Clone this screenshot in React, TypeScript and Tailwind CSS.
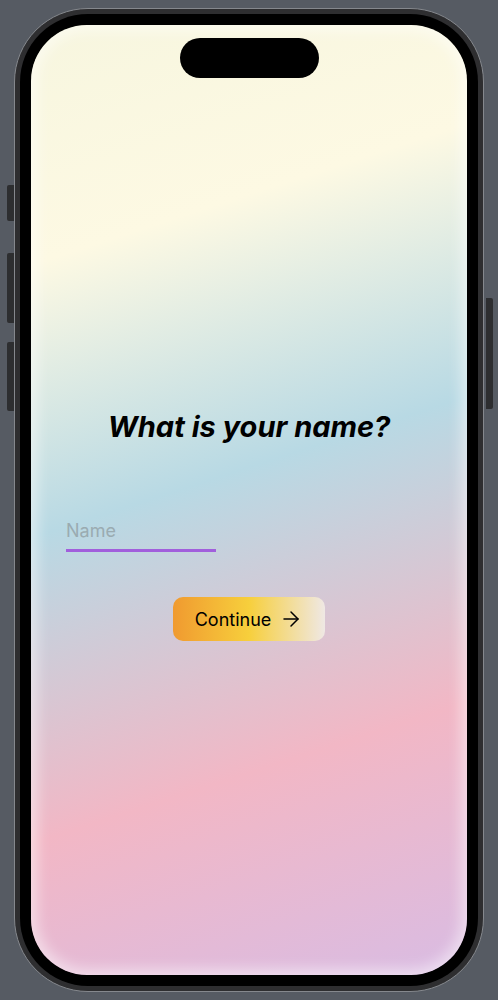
import { ArrowRight } from 'lucide-react';

export default function App() {
  return (
    <div className="relative h-[1000px] w-full overflow-hidden bg-[#565b63] font-['Inter',sans-serif]">
      {/* side buttons */}
      <div className="absolute left-[7px] top-[185px] h-[36px] w-[7px] rounded-l-[2px] bg-[#2d2e30]" />
      <div className="absolute left-[7px] top-[253px] h-[70px] w-[7px] rounded-l-[2px] bg-[#2d2e30]" />
      <div className="absolute left-[7px] top-[342px] h-[69px] w-[7px] rounded-l-[2px] bg-[#2d2e30]" />
      <div className="absolute left-[486px] top-[298px] h-[111px] w-[7px] rounded-r-[2px] bg-[#2d2e30]" />

      {/* phone frame */}
      <div className="ml-[14px] mt-[8px] h-[984px] w-[470px] rounded-[74px] border border-[#85888d] bg-[#2e2e30] p-[5px]">
        <div className="h-full w-full rounded-[68px] bg-black px-[11px] py-[11px]">
          <div className="relative h-full w-full overflow-hidden rounded-[56px] bg-[linear-gradient(162deg,#f7f6df_0%,#fdf9e3_22%,#b8d9e4_47%,#f2b7c5_75%,#d9bce3_100%)]">
            {/* soft edge glow */}
            <div className="pointer-events-none absolute inset-0 rounded-[56px] shadow-[inset_0_0_14px_6px_rgba(255,255,255,0.5)]" />

            {/* dynamic island */}
            <div className="absolute left-[149px] top-[13px] h-[40px] w-[139px] rounded-full bg-black" />

            <div className="relative flex flex-col pt-[384px]">
              <h1 className="text-center text-[29px] font-bold italic leading-[36px] text-black">
                What is your name?
              </h1>

              <div className="mt-[74px] pl-[35px]">
                <input
                  placeholder="Name"
                  className="w-[150px] border-b-[3px] border-[#a15fdc] bg-transparent pb-[6px] text-[18px] leading-[24px] text-black placeholder-[#9aabb1] outline-none"
                />
              </div>

              <div className="mt-[45px] flex justify-center">
                <button className="flex h-[44px] w-[152px] items-center justify-center gap-[8px] rounded-[10px] bg-[linear-gradient(90deg,#f09a30_0%,#f7cf3c_50%,#efe8e4_100%)] text-[18px] text-black">
                  <span>Continue</span>
                  <ArrowRight className="h-[24px] w-[24px]" strokeWidth={1.5} />
                </button>
              </div>
            </div>
          </div>
        </div>
      </div>
    </div>
  );
}
